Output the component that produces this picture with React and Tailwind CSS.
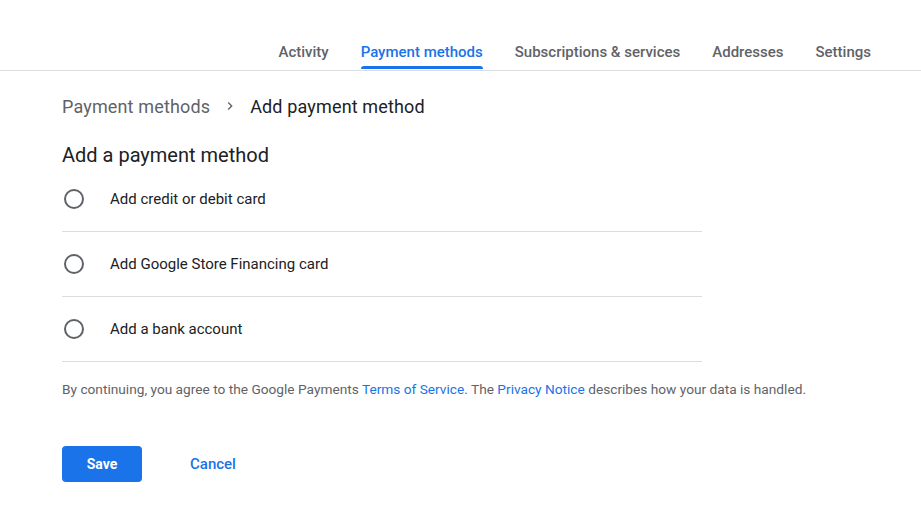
import React from "react";

const tabs = ["Activity", "Payment methods", "Subscriptions & services", "Addresses", "Settings"];
const options = ["Add credit or debit card", "Add Google Store Financing card", "Add a bank account"];

export default function App() {
  return (
    <div className="w-[921px] h-[525px] bg-white font-['Roboto',sans-serif] overflow-hidden">
      <div className="h-[71px] border-b border-[#dadce0] flex items-end justify-end pr-[50px]">
        <div className="flex gap-[32px]">
          {tabs.map((t, i) => (
            <div key={t} className="flex flex-col items-center">
              <div
                className={`text-[15px] font-medium leading-[20px] pb-[4px] ${
                  i === 1 ? "text-[#1a73e8]" : "text-[#5f6368]"
                }`}
              >
                {t}
              </div>
              <div className={`h-[3px] w-full rounded-t-[3px] mb-[1px] ${i === 1 ? "bg-[#1a73e8]" : "bg-transparent"}`} />
            </div>
          ))}
        </div>
      </div>

      <div className="pl-[62px]">
        <div className="flex items-center mt-[23px] h-[24px] text-[18px] tracking-[0.15px]">
          <span className="text-[#5f6368]">Payment methods</span>
          <svg className="mx-[12px]" width="16" height="16" viewBox="0 0 24 24">
            <path d="M8.59 16.59L13.17 12 8.59 7.41 10 6l6 6-6 6z" fill="#5f6368" />
          </svg>
          <span className="text-[#202124]">Add payment method</span>
        </div>

        <div className="mt-[25px] text-[20px] leading-[24px] text-[#202124]">Add a payment method</div>

        <div className="w-[640px]">
          {options.map((o) => (
            <div key={o} className="h-[65px] border-b border-[#dadce0] flex items-center">
              <div className="w-[20px] h-[20px] rounded-full border-2 border-[#5f6368] ml-[2px]" />
              <span className="ml-[26px] text-[15px] text-[#202124]">{o}</span>
            </div>
          ))}
        </div>

        <div className="mt-[18px] text-[13.7px] text-[#5f6368] leading-[18px]">
          By continuing, you agree to the Google Payments{" "}
          <span className="text-[#1a73e8]">Terms of Service</span>. The{" "}
          <span className="text-[#1a73e8]">Privacy Notice</span> describes how your data is handled.
        </div>

        <div className="flex items-center mt-[48px]">
          <button className="w-[80px] h-[36px] rounded-[4px] bg-[#1a73e8] text-white text-[14px] font-bold">
            Save
          </button>
          <button className="ml-[48px] text-[#1a73e8] text-[15px] font-medium">Cancel</button>
        </div>
      </div>
    </div>
  );
}
